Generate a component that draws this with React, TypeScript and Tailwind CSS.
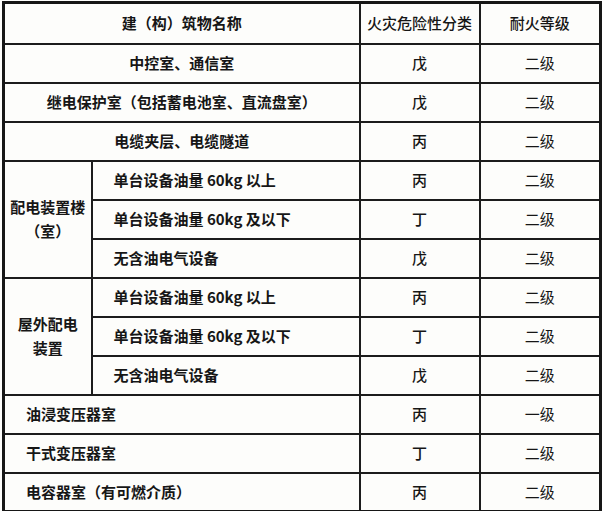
const cjk = "font-['Noto_Sans_CJK_SC','Noto_Sans',sans-serif]"

type Row = { name: string; cls: string; level: string }

const topRows: Row[] = [
  { name: "中控室、通信室", cls: "戊", level: "二级" },
  { name: "继电保护室（包括蓄电池室、直流盘室）", cls: "戊", level: "二级" },
  { name: "电缆夹层、电缆隧道", cls: "丙", level: "二级" },
]

const groups = [
  {
    title: ["配电装置楼", "（室）"],
    rows: [
      { name: "单台设备油量 60kg 以上", cls: "丙", level: "二级" },
      { name: "单台设备油量 60kg 及以下", cls: "丁", level: "二级" },
      { name: "无含油电气设备", cls: "戊", level: "二级" },
    ],
  },
  {
    title: ["屋外配电", "装置"],
    rows: [
      { name: "单台设备油量 60kg 以上", cls: "丙", level: "二级" },
      { name: "单台设备油量 60kg 及以下", cls: "丁", level: "二级" },
      { name: "无含油电气设备", cls: "戊", level: "二级" },
    ],
  },
]

const bottomRows: Row[] = [
  { name: "油浸变压器室", cls: "丙", level: "一级" },
  { name: "干式变压器室", cls: "丁", level: "二级" },
  { name: "电容器室（有可燃介质）", cls: "丙", level: "二级" },
]

const cell = "border-2 border-[#1c1c1c] h-[39px] p-0 align-middle"

export default function App() {
  return (
    <div className={`w-[602px] h-[511px] bg-[#fdfdfb] pl-[2px] pt-[1px] text-[15px] text-[#161616] ${cjk}`}>
      <table className="border-collapse table-fixed w-[597px] border-[3px] border-[#161616]">
        <colgroup>
          <col className="w-[88px]" />
          <col className="w-[268px]" />
          <col className="w-[120px]" />
          <col className="w-[121px]" />
        </colgroup>
        <thead>
          <tr>
            <th colSpan={2} className={`${cell} h-[41px] font-semibold text-center`}>建（构）筑物名称</th>
            <th className={`${cell} h-[41px] font-medium text-center`}>火灾危险性分类</th>
            <th className={`${cell} h-[41px] font-medium text-center`}>耐火等级</th>
          </tr>
        </thead>
        <tbody>
          {topRows.map((r, i) => (
            <tr key={i}>
              <td colSpan={2} className={`${cell} font-semibold text-center`}>{r.name}</td>
              <td className={`${cell} font-medium text-center`}>{r.cls}</td>
              <td className={`${cell} text-center`}>{r.level}</td>
            </tr>
          ))}
          {groups.map((g, gi) =>
            g.rows.map((r, i) => (
              <tr key={`${gi}-${i}`}>
                {i === 0 && (
                  <td rowSpan={3} className={`${cell} font-semibold text-center leading-[24px]`}>
                    {g.title[0]}
                    <br />
                    {g.title[1]}
                  </td>
                )}
                <td className={`${cell} font-semibold pl-[21px]`}>{r.name}</td>
                <td className={`${cell} font-medium text-center`}>{r.cls}</td>
                <td className={`${cell} text-center`}>{r.level}</td>
              </tr>
            ))
          )}
          {bottomRows.map((r, i) => (
            <tr key={i}>
              <td colSpan={2} className={`${cell} font-semibold pl-[21px]`}>{r.name}</td>
              <td className={`${cell} font-medium text-center`}>{r.cls}</td>
              <td className={`${cell} text-center`}>{r.level}</td>
            </tr>
          ))}
        </tbody>
      </table>
    </div>
  )
}
